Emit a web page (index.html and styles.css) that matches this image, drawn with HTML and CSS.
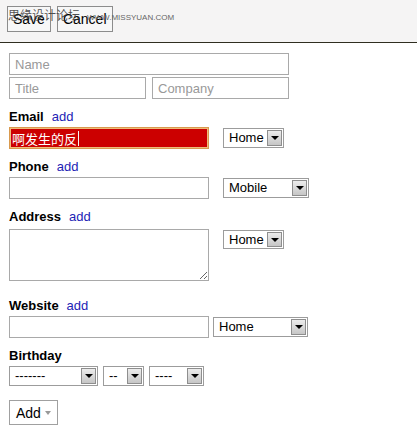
FILE: index.html
```html
<!DOCTYPE html>
<html lang="zh">
<head>
    <meta charset="UTF-8">
    <meta name="viewport" content="width=device-width, initial-scale=1.0">
    <title>Contact</title>
    <link rel="stylesheet" href="styles.css">
</head>
<body>
    <div class="toolbar">
        <button class="tool-btn">Save</button>
        <button class="tool-btn">Cancel</button>
        <div class="watermark">思缘设计论坛<span class="site">WWW.MISSYUAN.COM</span></div>
    </div>

    <div class="form">
        <input class="text wide" type="text" placeholder="Name">
        <div class="pair">
            <input class="text half" type="text" placeholder="Title">
            <input class="text half" type="text" placeholder="Company">
        </div>

        <div class="group">
            <div class="label">Email<a href="#">add</a></div>
            <div class="line">
                <div class="field focus">啊发生的反<span class="caret"></span></div>
                <div class="dropdown w-home gap-right"><span class="value">Home</span><span class="btn"></span></div>
            </div>
        </div>

        <div class="group">
            <div class="label">Phone<a href="#">add</a></div>
            <div class="line">
                <input class="text main" type="text">
                <div class="dropdown w-mobile gap-right"><span class="value">Mobile</span><span class="btn"></span></div>
            </div>
        </div>

        <div class="group">
            <div class="label label-address">Address<a href="#">add</a></div>
            <div class="line top">
                <textarea class="area"></textarea>
                <div class="dropdown w-home gap-right drop-down-1"><span class="value">Home</span><span class="btn"></span></div>
            </div>
        </div>

        <div class="group group-website">
            <div class="label">Website<a href="#">add</a></div>
            <div class="line">
                <input class="text main" type="text">
                <div class="dropdown w-site gap-small"><span class="value">Home</span><span class="btn"></span></div>
            </div>
        </div>

        <div class="group">
            <div class="label">Birthday</div>
            <div class="line birthday">
                <div class="dropdown w-month"><span class="value">-------</span><span class="btn"></span></div>
                <div class="dropdown w-day"><span class="value">--</span><span class="btn"></span></div>
                <div class="dropdown w-year"><span class="value">----</span><span class="btn"></span></div>
            </div>
        </div>

        <button class="add-btn">Add<span class="tri"></span></button>
    </div>
</body>
</html>
```

FILE: styles.css
```css
body {
    margin: 0;
    background-color: #fff;
    color: #000;
    font-family: Arial, 'Liberation Sans', sans-serif;
    font-size: 13px;
}
.toolbar {
    position: relative;
    height: 43px;
    box-sizing: border-box;
    padding: 6px 0 0 7px;
    display: flex;
    align-items: flex-start;
    gap: 6px;
    background-color: #f5f4f4;
    border-bottom: 1px solid #2f2e20;
}
.tool-btn {
    height: 26px;
    margin: 0;
    padding: 0 5px;
    border: 1px solid #8c8c8c;
    background-color: #f7f7f7;
    color: #000;
    font-family: Arial, 'Liberation Sans', sans-serif;
    font-size: 14px;
}
.watermark {
    position: absolute;
    left: 8px;
    top: 8px;
    color: rgba(50, 50, 50, 0.85);
    font-family: 'Noto Sans CJK SC', sans-serif;
    font-size: 12px;
    line-height: 14px;
    white-space: nowrap;
}
.watermark .site {
    margin-left: 7px;
    color: #666;
    font-family: Arial, 'Liberation Sans', sans-serif;
    font-size: 8px;
}
.form {
    padding: 10px 9px 0;
}
.text {
    display: block;
    height: 22px;
    box-sizing: border-box;
    margin: 0;
    padding: 0 5px;
    border: 1px solid #a9a9a9;
    font-family: Arial, 'Liberation Sans', sans-serif;
    font-size: 13px;
    background-color: #fff;
}
.text::placeholder {
    color: #999;
}
.wide {
    width: 280px;
}
.pair {
    display: flex;
    gap: 6px;
    margin-top: 2px;
}
.half {
    width: 137px;
}
.group {
    margin-top: 10px;
}
.group-website {
    margin-top: 17px;
}
.label {
    font-weight: bold;
    line-height: 16px;
    margin-bottom: 2px;
}
.label-address {
    margin-bottom: 4px;
}
.label a {
    margin-left: 8px;
    font-weight: normal;
    color: #2323b5;
    text-decoration: none;
}
.line {
    display: flex;
    align-items: center;
}
.line.top {
    align-items: flex-start;
}
.main {
    width: 200px;
}
.field {
    width: 200px;
    height: 22px;
    box-sizing: border-box;
    padding-left: 2px;
    display: flex;
    align-items: center;
    background-color: #cc0000;
    border: 1px solid #d99a4e;
    box-shadow: inset 0 0 0 1px #eebc7c;
    color: #fff;
    font-family: 'Noto Sans CJK SC', sans-serif;
    font-size: 13px;
}
.caret {
    width: 1px;
    height: 15px;
    margin-left: 1px;
    background-color: #f4f4f4;
}
.area {
    display: block;
    width: 200px;
    height: 52px;
    box-sizing: border-box;
    margin: 0;
    border: 1px solid #a9a9a9;
    resize: both;
}
.dropdown {
    display: flex;
    height: 20px;
    box-sizing: border-box;
    border: 1px solid #9c9c9c;
    background-color: #fff;
}
.dropdown .value {
    flex: 1;
    padding-left: 5px;
    line-height: 18px;
    white-space: nowrap;
    overflow: hidden;
}
.dropdown .btn {
    width: 15px;
    margin: 1px;
    box-sizing: border-box;
    display: flex;
    align-items: center;
    justify-content: center;
    border: 1px solid #8e8e8e;
    background: linear-gradient(#ececec, #c6c6c6);
}
.dropdown .btn::before {
    content: '';
    border-left: 4px solid transparent;
    border-right: 4px solid transparent;
    border-top: 4px solid #000;
}
.gap-right {
    margin-left: 14px;
}
.gap-small {
    margin-left: 4px;
}
.drop-down-1 {
    margin-top: 1px;
    height: 19px;
}
.w-home {
    width: 61px;
}
.w-mobile {
    width: 86px;
}
.w-site {
    width: 95px;
}
.birthday {
    gap: 5px;
}
.w-month {
    width: 89px;
}
.w-day {
    width: 41px;
}
.w-year {
    width: 55px;
}
.add-btn {
    margin-top: 14px;
    height: 25px;
    padding: 0 6px;
    display: flex;
    align-items: center;
    gap: 4px;
    border: 1px solid #a0a0a0;
    background-color: #fff;
    color: #000;
    font-family: Arial, 'Liberation Sans', sans-serif;
    font-size: 14px;
}
.add-btn .tri {
    border-left: 3.5px solid transparent;
    border-right: 3.5px solid transparent;
    border-top: 4px solid #999;
}
```
